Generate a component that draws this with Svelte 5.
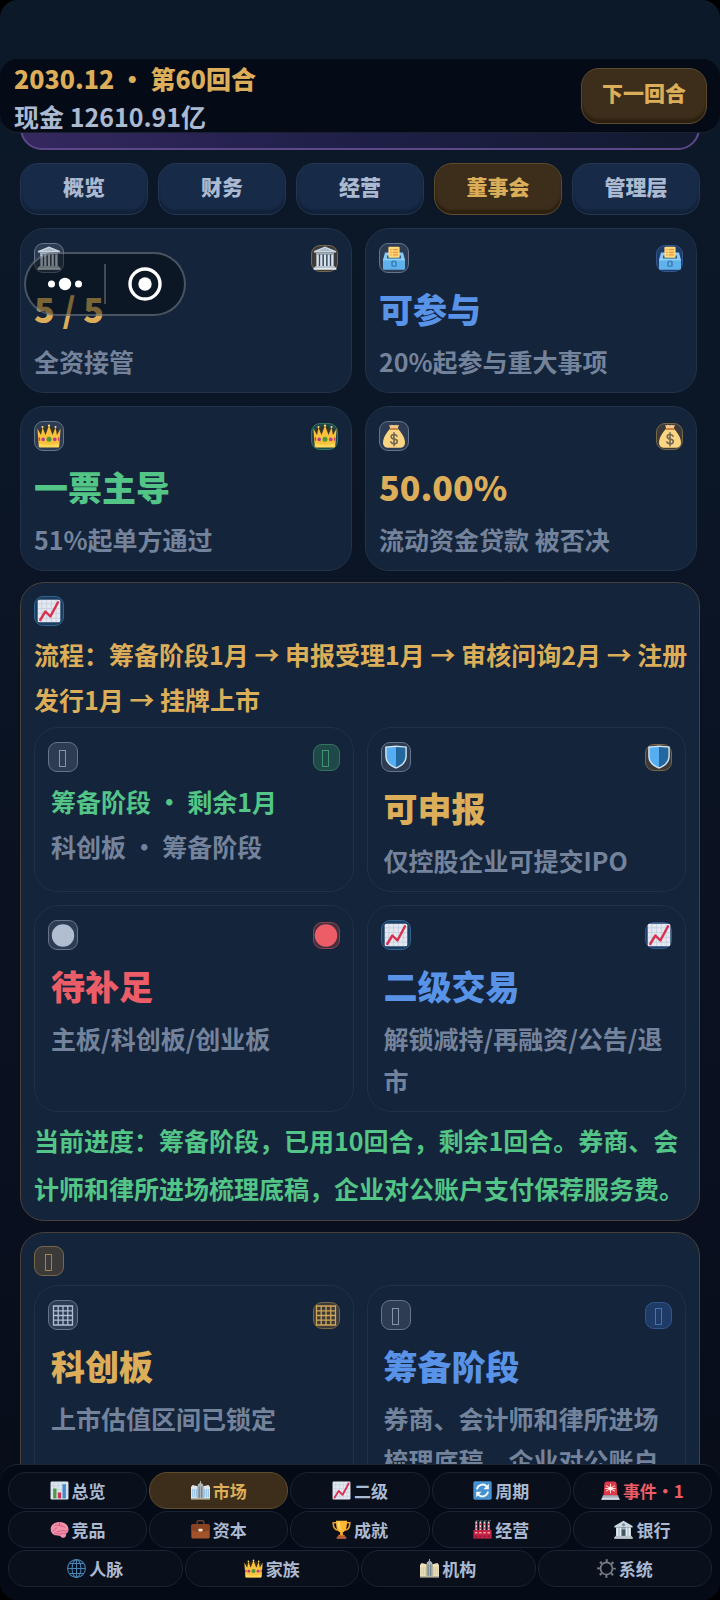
<script>
  const tabs = ['概览', '财务', '经营', '董事会', '管理层'];
  let activeTab = $state('董事会');
  let activeNav = $state('市场');

  const stats = [
    { icon: 'museum', left: 'plain', right: 'amber', title: '5 / 5', tone: 'gold', sub: '全资接管' },
    { icon: 'ballot', left: 'plain', right: 'blue', title: '可参与', tone: 'blue', sub: '20%起参与重大事项' },
    { icon: 'crown', left: 'plain', right: 'green', title: '一票主导', tone: 'green', sub: '51%起单方通过' },
    { icon: 'money', left: 'plain', right: 'amber', title: '50.00%', tone: 'gold', sub: '流动资金贷款 被否决' }
  ];
  const ipo = [
    { icon: 'blank', left: 'plain', right: 'green', title: '筹备阶段 · 剩余1月', tone: 'green', small: true, sub: '科创板 · 筹备阶段' },
    { icon: 'shield', left: 'plain', right: 'amber', title: '可申报', tone: 'gold', sub: '仅控股企业可提交IPO' },
    { icon: 'disc', left: 'plain', right: 'red', title: '待补足', tone: 'red', sub: '主板/科创板/创业板' },
    { icon: 'rise', left: 'sky', right: 'blue', title: '二级交易', tone: 'blue', sub: '解锁减持/再融资/公告/退市' }
  ];
  const listing = [
    { icon: 'grid', left: 'plain', right: 'amber', title: '科创板', tone: 'gold', sub: '上市估值区间已锁定' },
    { icon: 'blank', left: 'plain', right: 'blue', title: '筹备阶段', tone: 'blue', sub: '券商、会计师和律所进场梳理底稿，企业对公账户' }
  ];
  const navRows = [
    [
      { icon: 'bars', label: '总览' },
      { icon: 'city', label: '市场' },
      { icon: 'rise', label: '二级' },
      { icon: 'cycle', label: '周期' },
      { icon: 'siren', label: '事件·1', alert: true }
    ],
    [
      { icon: 'brain', label: '竞品' },
      { icon: 'briefcase', label: '资本' },
      { icon: 'trophy', label: '成就' },
      { icon: 'factory', label: '经营' },
      { icon: 'bank', label: '银行' }
    ],
    [
      { icon: 'globe', label: '人脉' },
      { icon: 'crown', label: '家族' },
      { icon: 'hall', label: '机构' },
      { icon: 'gear', label: '系统' }
    ]
  ];
</script>

{#snippet glyph(name)}
  <svg class="glyph" viewBox="0 0 24 24" aria-hidden="true">
    {#if name === 'museum'}
      <path d="M12 .5 23 5v1.6H1V5z" fill="#c9d6df" />
      <path d="M12 2 19 5H5z" fill="#a9bac6" />
      <path d="M3 6.6h18v2H3z" fill="#9fb0bc" />
      <path d="M4.2 8.6h15.6v11.6H4.2z" fill="#33465c" />
      <path d="M3.4 8.4h2.4v12H3.4zM7.2 8.4h2.2v12H7.2zM10.9 8.4h2.2v12h-2.2zM14.6 8.4h2.2v12h-2.2zM18.2 8.4h2.4v12h-2.4z" fill="#dbe4ea" />
      <path d="M2.2 20h19.6v1.6H2.2z" fill="#b4c3cd" />
      <path d="M.6 21.4h22.8v2.4H.6z" fill="#dfe7ec" />
    {:else if name === 'ballot'}
      <path d="M3 6.5h18l2 7.5H1z" fill="#8bcaf5" />
      <path d="M5 9.5h14v3H5z" fill="#275f8c" />
      <rect x="6.4" y=".8" width="11.2" height="11" rx="1" fill="#ffd97a" />
      <path d="M8.2 3h1.4v1.3H8.2zM10.8 3H16v1.3h-5.2zM8.2 5.7h1.4V7H8.2zM10.8 5.7H16V7h-5.2zM8.2 8.3h1.4v1.3H8.2zM10.8 8.3H16v1.3h-5.2z" fill="#ee9440" />
      <path d="M1 13h22v9.4q0 1.4-1.4 1.4H2.4Q1 23.800 1 22.400z" fill="#60b2ec" />
      <path d="M1 13h22v1.400H1z" fill="#91d0f8" />
      <rect x="9.200" y="14.600" width="5.600" height="6.400" rx="1.600" fill="#3a86bd" />
      <rect x="11" y="16.200" width="2" height="3.200" rx=".6" fill="#6bbaf0" />
    {:else if name === 'crown'}
      <path d="M2 5 12 2l10 3-1.500 9h-17z" fill="#3c3320" opacity=".8" />
      <path d="M.4 4.500 4 11l1.500-7.500L8.500 11 12 1.500 15.500 11l3-7.500L20 11l3.600-6.500L22.200 23H1.800z" fill="#f9c13c" />
      <path d="M1.200 9.500 3.600 13h16.800l2.400-3.500-.8 9.500H2z" fill="#f9c13c" />
      <path d="M2 19.500q10 2.500 20 0L21.700 23.500H2.300z" fill="#ffd85a" />
      <circle cx="12" cy="15.200" r="2.500" fill="#4e9a33" />
      <circle cx="6.200" cy="15.400" r="1.800" fill="#b13a9b" />
      <circle cx="17.800" cy="15.400" r="1.800" fill="#b13a9b" />
      <path d="M1.500 13.500h1.600v3.200H1.700zM22.500 13.500h-1.600v3.200h1.400z" fill="#d2434a" />
      <circle cx="12" cy="1.700" r="1.100" fill="#ffe089" /><circle cx="5.500" cy="3" r="1" fill="#ffe089" /><circle cx="18.500" cy="3" r="1" fill="#ffe089" />
    {:else if name === 'money'}
      <path d="M7 .8q1.500 1 2.600 0Q12 1.800 14 .7q1.500 1.100 3 .1l-1.400 4H8.400z" fill="#f8c98a" />
      <path d="M8.200 4.700h7.600C19 8 23 13.500 23 18.500c0 4-3 5.300-5 5.300H6c-2 0-5-1.300-5-5.300C1 13.500 5 8 8.200 4.700z" fill="#fbd583" />
      <rect x="7.400" y="3.900" width="9.200" height="2.100" rx="1" fill="#c98544" />
      <path d="M15 12.200q-1-1.700-3-1.700-2.800 0-2.800 2.200 0 1.800 2.900 2.300 3.200.5 3.200 2.500 0 2.300-3.100 2.300-2.500 0-3.400-1.900M12 8.900v12.800" fill="none" stroke="#6f6650" stroke-width="1.600" stroke-linecap="round" />
    {:else if name === 'rise'}
      <rect x=".7" y=".7" width="22.600" height="22.600" rx="1.600" fill="#e4e9f1" />
      <path d="M4.800 1v22M9.600 1v22M14.400 1v22M19.200 1v22M1 4.800h22M1 9.600h22M1 14.400h22M1 19.200h22" stroke="#c3cddb" stroke-width=".8" />
      <path d="M3.200 21 8.400 12.500l5 5L21 3.200" fill="none" stroke="#d9304f" stroke-width="2.400" stroke-linecap="round" stroke-linejoin="round" />
    {:else if name === 'shield'}
      <path d="M12 .6C15 .8 19 1.200 22.800 1.600V11C22.800 17.500 18 21.500 12 23.800 6 21.500 1.200 17.500 1.200 11V1.600C5 1.200 9 .8 12 .6z" fill="#d4e6f2" />
      <path d="M12 1.900C9 2 6 2.300 2.600 2.700V11c0 5.500 4 9.200 9.400 11.300z" fill="#56aef2" />
      <path d="M12 1.900c3 .1 6 .4 9.400.8V11c0 5.500-4 9.200-9.400 11.300z" fill="#22679d" />
    {:else if name === 'disc'}
      <circle cx="12" cy="12.500" r="11.200" fill="currentColor" />
    {:else if name === 'grid'}
      <path d="M2.500 3h19v19h-19zM7.200 3v19M12 3v19M16.800 3v19M2.500 7.800h19M2.500 12.500h19M2.500 17.200h19" fill="none" stroke="currentColor" stroke-width="1.300" />
    {:else if name === 'blank'}
      <rect x="8.500" y="5.500" width="6" height="16" fill="none" stroke="currentColor" stroke-width=".9" opacity=".75" />
    {:else if name === 'bars'}
      <rect x=".7" y=".7" width="22.600" height="22.600" rx="1.600" fill="#dce6ef" />
      <path d="M5 1v22M10 1v22M15 1v22M20 1v22M1 6h22M1 11h22M1 16h22" stroke="#c0cddb" stroke-width=".8" />
      <path d="M4 9.500h4.200V22H4z" fill="#4c9a45" />
      <path d="M10 14.500h4V22h-4z" fill="#cf3350" />
      <path d="M15.800 4H20v18h-4.200z" fill="#4389cc" />
    {:else if name === 'city' || name === 'hall'}
      {@const glass = name === 'city' ? '#8fc0e8' : '#b9d0dc'}
      {@const wall = name === 'city' ? '#dfe5ea' : '#eddfb4'}
      <path d="M11.300 0h1.400v3.500h-1.400z" fill="#a6adb3" />
      <path d="M8.500 4.500 12 2l3.500 2.500V23h-7z" fill="#a9b4b8" />
      <path d="M0 7.500 2 5l6.500 1.500V23H0zM24 7.500 22 5l-6.500 1.500V23H24z" fill={wall} />
      <path d="M1.500 10h1.300v10.500H1.500zM4 10h1.300v10.500H4zM6.400 10h1.300v10.500H6.400zM16.300 10h1.300v10.500h-1.300zM18.700 10H20v10.500h-1.300zM21.200 10h1.300v10.500h-1.300z" fill={glass} />
      <path d="M9.700 7h1.300v14H9.700zM12.900 7h1.300v14h-1.300z" fill="#697b86" />
      <path d="M0 21.500h24v1.800H0z" fill="#b6b1a0" />
    {:else if name === 'cycle'}
      <rect x=".4" y=".4" width="23.200" height="23.200" rx="2" fill="#4791cf" />
      <path d="M5 10.500A7.300 7.300 0 0 1 17.600 7M19 13.500A7.300 7.300 0 0 1 6.400 17" fill="none" stroke="#f6fbff" stroke-width="2.400" />
      <path d="M20 3.500v6.800h-6.800zM4 20.500v-6.800h6.800z" fill="#f6fbff" />
    {:else if name === 'siren'}
      <path d="M3.200 18.500 4.300 3.500Q4.600.5 7.500.5h9q2.900 0 3.200 3l1.100 15z" fill="#e0364c" />
      <path d="M12 3.800v11M6.800 6.200l10.400 6.400M17.200 6.200 6.800 12.600M5.800 9.400h12.400" stroke="#ffd6cf" stroke-width="1.300" stroke-linecap="round" />
      <circle cx="12" cy="9.400" r="2.600" fill="#ffece5" />
      <path d="M2.500 18h19l2 5.600H.5z" fill="#a8b1ba" />
      <path d="M1.300 21.300h21.400l.8 2.300H.5z" fill="#d2d8dd" />
    {:else if name === 'brain'}
      <path d="M1 13C0 7.500 4.500 3 10.500 2.500 17 2 22.500 5 23.300 11c.5 3.500-1 5.500-3 6.200.5 2.500-.8 5-3.300 5.300-2.200.2-3-1.500-4.500-2.700C8 20 2 19.500 1 13z" fill="#f48fa9" />
      <path d="M4 14c1.500-3 3.500-2.500 5-4.500M6.500 6.500C9 6 10 7.500 13 6M12 3v4c2.500 1.500 5 0 7 2.500M9.500 14.500c3 1 4.500-2 8-1M5.500 17c2-.5 3-.5 5 .5s5-1.500 9.500 0M17 13c1 1.500 3 1.500 5 .5" fill="none" stroke="#cf5e82" stroke-width="1.200" stroke-linecap="round" />
    {:else if name === 'briefcase'}
      <path d="M7.800 6V2.500Q7.800.9 9.400.9h5.200q1.600 0 1.600 1.600V6" fill="none" stroke="#66402c" stroke-width="1.800" />
      <rect x=".4" y="5.500" width="23.200" height="18" rx="2" fill="#a3532a" />
      <path d="M.4 7.500q0-2 2-2h19.200q2 0 2 2V13q-11.600 4-23.200 0z" fill="#8a4322" />
      <rect x="9.500" y="11" width="5" height="3.500" rx=".8" fill="#efe4d3" />
    {:else if name === 'trophy'}
      <path d="M5.500 3.500H1.500q0 8.500 6 9.300M18.500 3.500h4q0 8.500-6 9.300" fill="none" stroke="#e99c2e" stroke-width="2" />
      <path d="M5 1h14c0 8-1.500 13.500-5.300 14.500v4h-3.400v-4C6.500 14.500 5 9 5 1z" fill="#fdb733" />
      <path d="M7 2h3q0 7 1.500 11.500C8 12 7 7 7 2z" fill="#ffdc70" />
      <path d="M8.500 18.500h7l1.200 2.500H7.300z" fill="#d07a28" />
      <path d="M6 21h12v2.800H6z" fill="#bd643b" />
    {:else if name === 'factory'}
      <path d="M3 2h2.300v12H3zM8.200 2h2.300v12H8.200zM13.400 2h2.300v12h-2.300zM18.600 2h2.300v12h-2.300z" fill="#e8e4e5" />
      <path d="M3 4.500h2.300v2H3zM8.200 4.500h2.300v2H8.200zM13.400 4.500h2.300v2h-2.300zM18.600 4.500h2.300v2h-2.300zM3 9h2.300v2H3zM8.200 9h2.300v2H8.200zM13.400 9h2.300v2h-2.300zM18.600 9h2.300v2h-2.300z" fill="#c5314d" />
      <path d="M4 .5q2-1 3 0M9.200.5q2-1 3 0M14.400.5q2-1 3 0M19.600.5q2-1 3 0" stroke="#9aa5b0" stroke-width=".8" fill="none" />
      <path d="M.5 12.500h23v11H.5z" fill="#c42445" />
      <path d="M2.500 15h3v2.200h-3zM7.800 15h3v2.200h-3zM13.100 15h3v2.200h-3zM18.400 15h3v2.200h-3z" fill="#f0a5a0" />
      <path d="M2.500 19.500h3v4h-3zM7.800 19.500h3v2.200h-3zM13.100 19.500h3v2.200h-3zM18.400 19.500h3v2.200h-3z" fill="#8a1d3a" />
    {:else if name === 'bank'}
      <path d="M12 1 23.500 7.500v2H.5v-2z" fill="#cbd8df" />
      <circle cx="12" cy="6" r="1.900" fill="#778e9c" />
      <path d="M2.500 9.500h19v11h-19z" fill="#9fb2be" />
      <path d="M3 9.500h2.600v11H3zM7 9.500h2v11H7zM15 9.500h2v11h-2zM18.400 9.500H21v11h-2.600z" fill="#e5edf1" />
      <path d="M9.700 12h4.600v8.500H9.700z" fill="#3f5867" />
      <path d="M1.500 20h21v1.800h-21z" fill="#b4c4cd" />
      <path d="M.3 21.700h23.400v2H.3z" fill="#dfe8ec" />
    {:else if name === 'globe'}
      <g fill="none" stroke="#4685b5" stroke-width="1.300">
        <circle cx="12" cy="12" r="11.200" />
        <ellipse cx="12" cy="12" rx="5.600" ry="11.200" />
        <path d="M12 .8v22.400M.8 12h22.400M2.800 5.800h18.400M2.800 18.200h18.400" />
      </g>
    {:else if name === 'gear'}
      <g fill="none" stroke="#777d83">
        <circle cx="12" cy="12" r="7.600" stroke-width="2.200" />
        <circle cx="12" cy="12" r="10" stroke-width="3.400" stroke-dasharray="2.600 5.254" stroke-dashoffset="1.300" />
      </g>
    {/if}
  </svg>
{/snippet}

{#snippet badge(name, tone, compact)}
  <span class="badge {tone}" class:compact>{@render glyph(name)}</span>
{/snippet}

{#snippet cardItem(item, nested)}
  <article class="card" class:nested>
    <div class="card-icons">
      {@render badge(item.icon, item.left, false)}
      {@render badge(item.icon, item.right, true)}
    </div>
    <h3 class={item.tone + '-text'} class:small={item.small}>{item.title}</h3>
    <p>{item.sub}</p>
  </article>
{/snippet}

<div class="app" lang="zh-CN">
  <header>
    <div class="status">
      <strong>2030.12 · 第60回合</strong>
      <span>现金 12610.91亿</span>
    </div>
    <button class="raised gold next">下一回合</button>
  </header>

  <main>
    <div class="hero"></div>
    <div class="tabs">
      {#each tabs as tab}
        <button class="raised" class:gold={tab === activeTab} onclick={() => (activeTab = tab)}>{tab}</button>
      {/each}
    </div>

    <section class="cards outer">
      {#each stats as item}{@render cardItem(item, false)}{/each}
    </section>

    <section class="panel">
      {@render badge('rise', 'sky', false)}
      <p class="flow">流程：筹备阶段1月 → 申报受理1月 → 审核问询2月 → 注册发行1月 → 挂牌上市</p>
      <div class="cards">
        {#each ipo as item}{@render cardItem(item, true)}{/each}
      </div>
      <p class="progress">当前进度：筹备阶段，已用10回合，剩余1回合。券商、会计师和律所进场梳理底稿，企业对公账户支付保荐服务费。</p>
    </section>

    <section class="panel last">
      {@render badge('blank', 'amber', false)}
      <div class="cards">
        {#each listing as item}{@render cardItem(item, true)}{/each}
      </div>
    </section>
  </main>

  <nav>
    {#each navRows as row}
      <div class="nav-row">
        {#each row as item}
          <button
            class:active={item.label === activeNav}
            class:alert={item.alert}
            onclick={() => (activeNav = item.label)}
          >{@render glyph(item.icon)}<span>{item.label}</span></button>
        {/each}
      </div>
    {/each}
  </nav>

  <div class="capsule">
    <button aria-label="更多">
      <svg width="36" height="14" viewBox="0 0 36 14" aria-hidden="true">
        <circle cx="4.500" cy="7" r="3.500" /><circle cx="18" cy="7" r="6.200" /><circle cx="31.500" cy="7" r="3.500" />
      </svg>
    </button>
    <button aria-label="关闭">
      <svg width="34" height="34" viewBox="0 0 34 34" aria-hidden="true">
        <circle cx="17" cy="17" r="15" fill="none" stroke="#fff" stroke-width="3.400" /><circle cx="17" cy="17" r="6.700" />
      </svg>
    </button>
  </div>
</div>

<style>
  :global(body) {
    margin: 0;
    background: #000;
  }
  .app {
    position: relative;
    box-sizing: border-box;
    height: 100vh;
    padding-top: 59px;
    display: flex;
    flex-direction: column;
    overflow: hidden;
    border-radius: 18px;
    background: linear-gradient(180deg, #0c1929 0%, #0b1525 35%, #0a1020 70%, #070c17 100%);
    font-family: 'Noto Sans CJK SC', 'Noto Sans', sans-serif;
    font-weight: 700;
    color: #acbad1;
  }
  .app * {
    box-sizing: border-box;
  }
  button {
    margin: 0;
    padding: 0;
    font: inherit;
    color: inherit;
    cursor: pointer;
  }
  h3,
  p {
    margin: 0;
    font-weight: 700;
  }

  header {
    position: relative;
    z-index: 1;
    flex: none;
    display: flex;
    justify-content: space-between;
    align-items: center;
    padding: 0 13px 0 14px;
    border-radius: 18px;
    border-bottom: 1px solid #172130;
    background: #050b16;
  }
  .status {
    display: grid;
    margin-bottom: -3px;
    font-size: 25px;
    line-height: 38px;
  }
  .status strong {
    color: #dcae59;
  }
  .raised {
    height: 52px;
    padding-bottom: 6px;
    border: 1px solid #243650;
    border-radius: 18px;
    background: #172a47;
    box-shadow: inset 0 -4px 2px #12213a;
    font-size: 21px;
    font-weight: 900;
    line-height: 30px;
  }
  .raised.gold {
    border-color: #5d4b2d;
    background: #3d2e1b;
    box-shadow: inset 0 -4px 2px #2c2011;
    color: #dcae59;
  }
  .next {
    width: 126px;
    height: 56px;
    padding-bottom: 8px;
  }

  main {
    flex: 1;
    min-height: 0;
    padding: 0 20px;
    overflow: hidden;
  }
  .hero {
    height: 58px;
    margin-top: -41px;
    border: 2px solid #5c4788;
    border-radius: 22px;
    background: linear-gradient(90deg, #35285f, #20204a 45%, #111a2e);
  }
  .tabs {
    display: grid;
    grid-template-columns: repeat(5, 1fr);
    gap: 10px;
    margin: 13px 0;
  }
  .cards {
    display: grid;
    grid-template-columns: repeat(2, 1fr);
    gap: 13px;
  }
  .outer {
    padding-right: 3px;
  }
  .card {
    padding: 14px 13px 9px;
    border: 1px solid #213249;
    border-radius: 24px;
    background: #14243a;
  }
  .card-icons {
    display: flex;
    align-items: center;
    justify-content: space-between;
    height: 30px;
    margin-bottom: 12px;
  }
  .card h3 {
    margin-bottom: 7px;
    font-size: 34px;
    font-weight: 900;
    line-height: 48px;
  }
  .card h3.small {
    font-size: 25px;
    font-weight: 700;
    line-height: 34px;
  }
  .card p {
    padding-bottom: 1px;
    font-size: 25px;
    line-height: 42px;
    color: #74839c;
  }
  .nested {
    border-color: #203248;
  }
  .nested h3,
  .nested p {
    padding-left: 3px;
  }
  .gold-text {
    color: #dcae59;
  }
  .blue-text {
    color: #5893e8;
  }
  .green-text {
    color: #53c587;
  }
  .red-text {
    color: #ec5d67;
  }

  .badge {
    display: grid;
    place-items: center;
    width: 30px;
    height: 30px;
    border: 1px solid #66748a;
    border-radius: 9px;
    background: #2d3b53;
    color: #b1bed1;
  }
  .badge.compact {
    width: 27px;
    height: 27px;
  }
  .badge .glyph {
    width: 24px;
    height: 24px;
  }
  .badge.sky {
    border-color: #33648d;
    background: #1b3d60;
  }
  .badge.blue {
    border-color: #32568c;
    background: #1e3b67;
    color: #5c8fdc;
  }
  .badge.amber {
    border-color: #766749;
    background: #3c3a39;
    color: #d0a658;
  }
  .badge.green {
    border-color: #34745f;
    background: #1f4848;
    color: #53b885;
  }
  .badge.red {
    border-color: #87434f;
    background: #44303f;
    color: #ec5d67;
  }

  .panel {
    margin-top: 11px;
    padding: 13px 7px 6px 13px;
    border: 1px solid #47413a;
    border-radius: 24px;
    background: #14243a;
  }
  .panel .cards {
    padding-right: 6px;
  }
  .panel.last > .badge {
    margin-bottom: 9px;
  }
  .flow,
  .progress {
    font-size: 25px;
  }
  .flow {
    margin: 6px 0 5px;
    line-height: 45px;
    color: #dcae59;
  }
  .progress {
    margin-top: 4px;
    padding-bottom: 2px;
    line-height: 48px;
    color: #53c587;
  }

  nav {
    position: relative;
    z-index: 1;
    flex: none;
    display: grid;
    gap: 2px;
    padding: 7px 8px 13px;
    border-top: 1px solid #1a2433;
    border-radius: 18px;
    background: #050b16;
  }
  .nav-row {
    display: grid;
    grid-auto-flow: column;
    grid-auto-columns: 1fr;
    gap: 2px;
  }
  .nav-row button {
    display: flex;
    align-items: center;
    justify-content: center;
    gap: 3px;
    height: 37px;
    border: 1px solid #1b2432;
    border-radius: 18px;
    background: #09101c;
    font-size: 17px;
    line-height: 24px;
  }
  .nav-row .glyph {
    width: 19px;
    height: 19px;
  }
  .nav-row .active {
    border-color: #5d4b2d;
    background: #3d2e1b;
    color: #dcae59;
  }
  .nav-row .alert {
    color: #ec5d67;
  }

  /* Floating host-app control over the page */
  .capsule {
    position: absolute;
    z-index: 2;
    top: 252px;
    left: 24px;
    display: grid;
    grid-template-columns: 78px 1fr;
    align-items: center;
    width: 162px;
    height: 64px;
    border: 2px solid rgba(160, 170, 180, 0.42);
    border-radius: 32px;
    background: rgba(0, 6, 8, 0.44);
  }
  .capsule button {
    display: grid;
    place-items: center;
    height: 40px;
    border: 0;
    background: none;
  }
  .capsule button + button {
    border-left: 2px solid rgba(160, 170, 180, 0.35);
  }
  .capsule svg {
    fill: #fff;
  }
</style>
